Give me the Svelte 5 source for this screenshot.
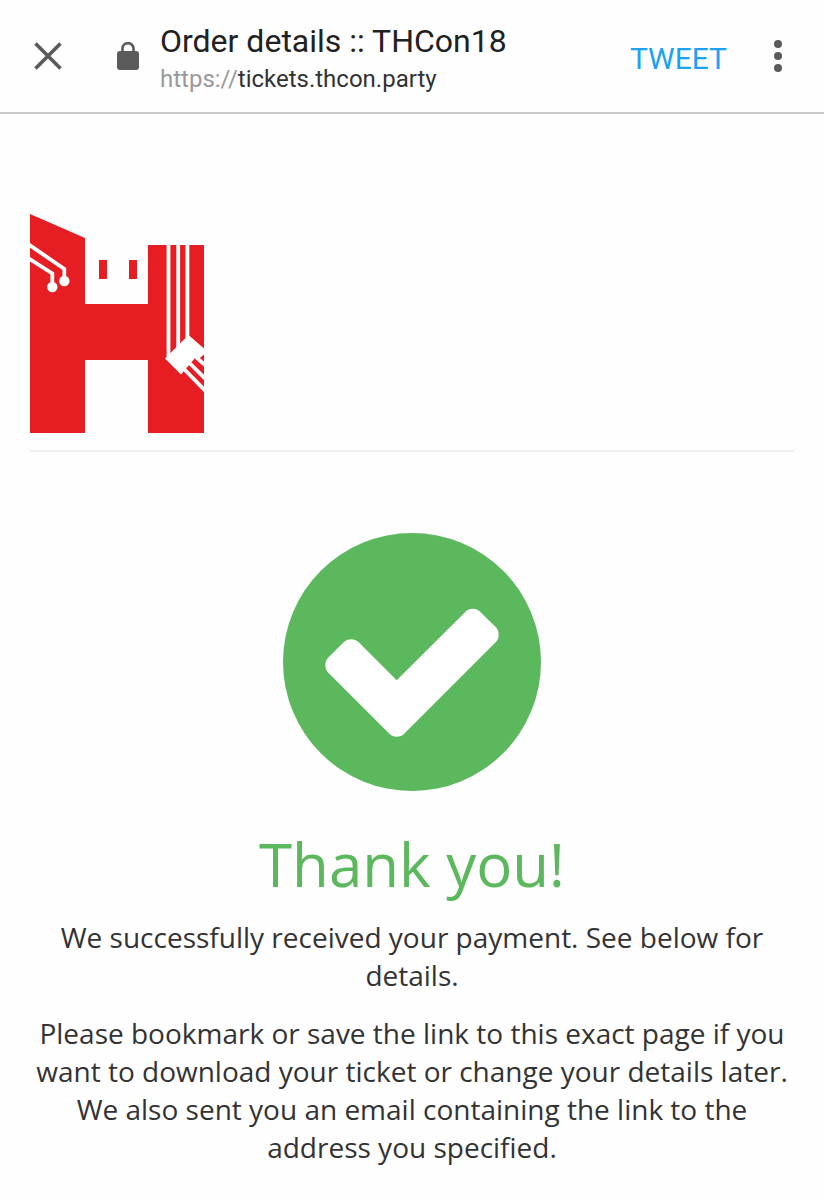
<script lang="ts">
	interface Props {
		title?: string;
		host?: string;
	}

	let { title = 'Order details :: THCon18', host = 'tickets.thcon.party' }: Props = $props();

	const messages = [
		'We successfully received your payment. See below for details.',
		'Please bookmark or save the link to this exact page if you want to download your ticket or change your details later. We also sent you an email containing the link to the address you specified.'
	];
</script>

<header class="toolbar">
	<button type="button" class="icon-button" aria-label="Close">
		<svg width="28" height="28" viewBox="0 0 28 28" fill="none" stroke="currentColor" stroke-width="3.6">
			<path d="M1.5 1.5l25 25M26.5 1.5l-25 25" />
		</svg>
	</button>
	<svg class="lock" width="22" height="28" viewBox="0 0 22 28" aria-hidden="true">
		<path d="M5.5 11V6.5a5.5 5.3 0 0 1 11 0V11" fill="none" stroke="currentColor" stroke-width="2.6" />
		<rect x="0" y="9" width="22" height="19" rx="3" fill="currentColor" />
	</svg>
	<div class="page-info">
		<div class="page-title">{title}</div>
		<div class="page-url"><span class="scheme">https://</span>{host}</div>
	</div>
	<button type="button" class="tweet">TWEET</button>
	<button type="button" class="icon-button" aria-label="More options">
		<svg width="8" height="32" viewBox="0 0 8 32" fill="currentColor">
			<circle cx="4" cy="4" r="4" />
			<circle cx="4" cy="16" r="4" />
			<circle cx="4" cy="28" r="4" />
		</svg>
	</button>
</header>

<main class="content">
	<div class="event-header">
		<a href="/" class="logo" aria-label="THCon18">
			<svg width="174" height="220" viewBox="0 0 174 220">
				<path fill="#e61e23" d="M0 1l55 24v66h63V32h56v188h-56v-73H55v73H0z" />
				<path fill="#e61e23" d="M69 47h8v19h-8zM99 47h8v19h-8z" />
				<!-- circuit traces -->
				<g fill="none" stroke="#fff" stroke-width="3.8">
					<path d="M-2 31L34.3 56v12M-2 45L22.3 60.5V74" />
					<path d="M138.5 30v114M148.2 30v106M157.4 30v96" />
					<path d="M154 156l22 22.5M160 150.5l16 16M166 144l10 9" />
				</g>
				<circle cx="34.3" cy="68" r="5.2" fill="#fff" />
				<circle cx="22.3" cy="74" r="5.2" fill="#fff" />
				<path fill="#fff" d="M135 145.5L158.5 122l16 14v5l-6 5-3.500-1L151 161.500z" />
			</svg>
		</a>
	</div>

	<section class="thank-you">
		<svg class="check" width="258" height="258" viewBox="128 128 1536 1536" aria-hidden="true">
			<circle cx="896" cy="896" r="768" fill="#5cb85c" />
			<path
				fill="#fff"
				d="M1412 734q0-28-18-46l-91-90q-19-19-45-19t-45 19l-408 407-226-226q-19-19-45-19t-45 19l-91 90q-18 18-18 46 0 27 18 45l362 362q19 19 45 19 27 0 46-19l543-543q18-18 18-45z"
			/>
		</svg>
		<h1>Thank you!</h1>
		{#each messages as message}
			<p>{message}</p>
		{/each}
	</section>
</main>

<style>
	:global(body) {
		margin: 0;
		background: #fefefe;
	}

	.toolbar {
		display: flex;
		align-items: center;
		padding: 16px 42px 16px 34px;
		border-bottom: 2px solid #c8c8c8;
		font-family: Roboto, sans-serif;
		color: #5a5a5a;
	}

	button {
		padding: 0;
		border: none;
		background: none;
		color: inherit;
		font: inherit;
		cursor: pointer;
	}

	.icon-button {
		display: flex;
	}

	.lock {
		flex-shrink: 0;
		margin: 0 21px 0 55px;
	}

	.page-info {
		flex: 1;
		min-width: 0;
		padding-top: 4px;
		white-space: nowrap;
	}

	.page-title {
		font-size: 32px;
		line-height: 42px;
		color: #212121;
	}

	.page-url {
		font-size: 24px;
		line-height: 34px;
		color: #333;
	}

	.scheme {
		color: #999;
	}

	.tweet {
		margin-right: 47px;
		padding-top: 6px;
		font-size: 30px;
		line-height: 36px;
		color: #1da1f2;
	}

	.content {
		padding: 99px 30px 30px;
		font-family: 'Open Sans', sans-serif;
		color: #333;
	}

	.event-header {
		padding-bottom: 17px;
		border-bottom: 2px solid #eee;
	}

	.logo {
		display: inline-block;
		vertical-align: top;
	}

	.logo svg {
		display: block;
	}

	.thank-you {
		padding-top: 81px;
		text-align: center;
	}

	.check {
		display: block;
		margin: 0 auto;
	}

	h1 {
		margin: 37px 0 18px;
		font-size: 60px;
		font-weight: 400;
		line-height: 72px;
		color: #5cb85c;
	}

	p {
		margin: 0 0 20px;
		font-size: 28px;
		line-height: 38px;
	}
</style>
